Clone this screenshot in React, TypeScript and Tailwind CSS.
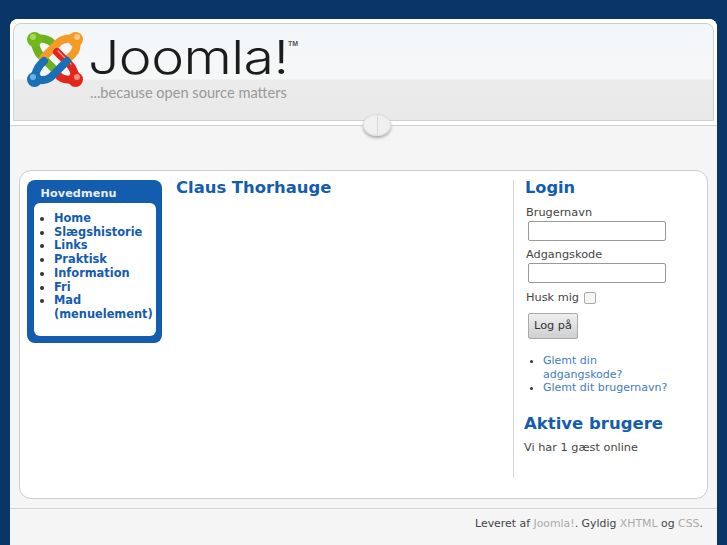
const font = { fontFamily: '"DejaVu Sans", sans-serif' };

const menu = ["Home", "Slægshistorie", "Links", "Praktisk", "Information", "Fri", "Mad (menuelement)"];

function JoomlaMark() {
  return (
    <svg width="56" height="56" viewBox="0 0 56 56" fill="none" strokeLinecap="round" className="shrink-0">
      {/* green */}
      <path d="M7 7 Q9 19 14 24 L27 37" stroke="#6fb01f" strokeWidth="8" />
      <path d="M7 7 Q18 5 24 10" stroke="#6fb01f" strokeWidth="8" />
      <circle cx="7.5" cy="7.5" r="7.5" fill="#74b71b" />
      <circle cx="6" cy="5" r="3" fill="#a9d65f" />
      {/* orange */}
      <path d="M49 7 Q38 5 32 10 L16 26" stroke="#f39a27" strokeWidth="8" />
      <path d="M49 7 Q51 17 46 22 L42 26" stroke="#f39a27" strokeWidth="8" />
      <circle cx="48.5" cy="7.5" r="7.5" fill="#f59a23" />
      <circle cx="50" cy="5" r="3" fill="#fbc77f" />
      {/* red */}
      <path d="M49 47 Q47 37 43 33 L30 20" stroke="#e1261c" strokeWidth="8" />
      <path d="M49 47 Q38 49 33 45 L29 41" stroke="#e1261c" strokeWidth="8" />
      <path d="M31 19 L44 32" stroke="#f4a09a" strokeWidth="1.2" />
      <circle cx="48.5" cy="47.5" r="7.5" fill="#e1261c" />
      <circle cx="50" cy="45" r="3" fill="#f28b82" />
      {/* blue */}
      <path d="M7 47 Q9 38 13 33 L17 29" stroke="#1a6fb5" strokeWidth="8" />
      <path d="M7 47 Q18 50 24 45 L40 29" stroke="#1a6fb5" strokeWidth="8" />
      <circle cx="7.5" cy="47.5" r="7.5" fill="#1a6fb5" />
      <circle cx="6" cy="45" r="3" fill="#6fb1e0" />
    </svg>
  );
}

export default function App() {
  return (
    <div className="h-[545px] w-[727px] overflow-hidden bg-[#0a3567] px-[10px] pt-[19px]" style={font}>
      <div className="flex h-[526px] flex-col rounded-t-lg bg-[#f5f5f5]">
        {/* header */}
        <div className="relative h-[106px] shrink-0 rounded-t-lg bg-white px-[3px] pt-[4px]">
          <div className="h-[98px] rounded-t-lg border border-[#cfcfcf] bg-[linear-gradient(#f2f6fa,#f6f7f7_55px,#ebebeb_56px,#e9e9e9)] pl-[13px] pt-[8px]">
            <div className="flex items-start">
              <JoomlaMark />
              <div className="ml-[7px] flex flex-col">
                <div className="relative h-[46px] text-[47px] font-light leading-[46px] text-[#1c1c1c]" style={{ fontFamily: 'Inter, sans-serif' }}>
                  <span className="ml-[-2px] mt-[2px] inline-block origin-left scale-x-[1.18] tracking-[-0.5px]">Joomla!</span>
                  <span className="absolute left-[198px] top-[-11px] text-[7px] font-bold tracking-normal text-[#555]" style={{ fontFamily: '"Liberation Sans", sans-serif' }}>TM</span>
                </div>
                <div className="mt-[5px] text-[14.6px] leading-5 text-[#999]" style={{ fontFamily: 'Lato, sans-serif' }}>...because open source matters</div>
              </div>
            </div>
          </div>
          <div className="absolute left-[353px] top-[95px] h-[22px] w-[28px] rounded-[50%] border border-[#dedede] bg-[linear-gradient(90deg,#f0f0f0_49%,#d8d8d8_49%,#d8d8d8_53%,#f0f0f0_53%)] shadow-[0_2px_3px_#aaa]" />
        </div>
        <div className="h-px shrink-0 bg-[#d0d0d0]" />

        {/* main card */}
        <div className="mx-[9px] mt-[44px] flex h-[329px] shrink-0 rounded-xl border border-[#cccccc] bg-white pl-[7px] pr-[5px] pt-[9px]">
          <div className="h-[163px] w-[135px] shrink-0 rounded-lg bg-[#135cae] px-[6.5px] pb-[6px]">
            <h3 className="pl-[7px] pt-[5px] text-[11.2px] font-bold leading-[18px] tracking-[0.1px] text-[#e8eef6]">Hovedmenu</h3>
            <ul className="h-[133px] list-disc rounded-md bg-white pl-[20.5px] pr-0 pt-[9px] text-[11.4px] font-bold leading-[13.7px] text-[#135cae] marker:text-[#333]">
              {menu.map((item) => (
                <li key={item}>{item}</li>
              ))}
            </ul>
          </div>

          <div className="ml-[14px] w-[337px] shrink-0">
            <h2 className="-mt-[2px] text-[16.4px] font-bold leading-5 text-[#135cae]">Claus Thorhauge</h2>
          </div>

          <div className="h-[298px] w-[183px] shrink-0 border-l border-[#d4d4d4] pl-[10px] text-[11.3px] text-[#444]">
            <h2 className="-mt-[2px] pl-px text-[16.2px] font-bold leading-5 text-[#135cae]">Login</h2>
            <div className="ml-[2px] mt-[8px] leading-[14px]">Brugernavn</div>
            <input className="ml-1 mt-[1px] block h-5 w-[138px] rounded-[2px] border border-[#999] bg-white" />
            <div className="ml-[2px] mt-[7px] leading-[14px]">Adgangskode</div>
            <input className="ml-1 mt-[1px] block h-5 w-[138px] rounded-[2px] border border-[#999] bg-white" />
            <div className="ml-[2px] mt-[8px] flex items-center leading-[14px]">
              Husk mig
              <span className="ml-[5px] h-3 w-3 rounded-[2px] border border-[#aaa] bg-[#f4f4f4]" />
            </div>
            <button className="ml-1 mt-[8px] block h-[26px] w-[50px] rounded-[2px] border border-[#aaa] bg-[linear-gradient(#efefef,#cfcfcf)] text-[11.3px] text-[#333]">Log på</button>
            <ul className="ml-[19px] mt-[15px] list-disc text-[11px] leading-[13.7px] text-[#3f7cc4] marker:text-[#333]">
              <li>Glemt din<br />adgangskode?</li>
              <li>Glemt dit brugernavn?</li>
            </ul>
            <h2 className="mt-[19px] text-[16.5px] font-bold leading-5 text-[#135cae]">Aktive brugere</h2>
            <p className="mt-[7px] leading-[14px]">Vi har 1 gæst online</p>
          </div>
        </div>

        {/* footer */}
        <div className="mt-[9px] flex-1 border-t border-[#d4d4d4] pr-[14px] pt-[8px] text-right text-[10.9px] leading-[14px] text-[#444]">
          Leveret af <span className="text-[#aaa]">Joomla!</span>. Gyldig <span className="text-[#aaa]">XHTML</span> og <span className="text-[#aaa]">CSS</span>.
        </div>
      </div>
    </div>
  );
}
